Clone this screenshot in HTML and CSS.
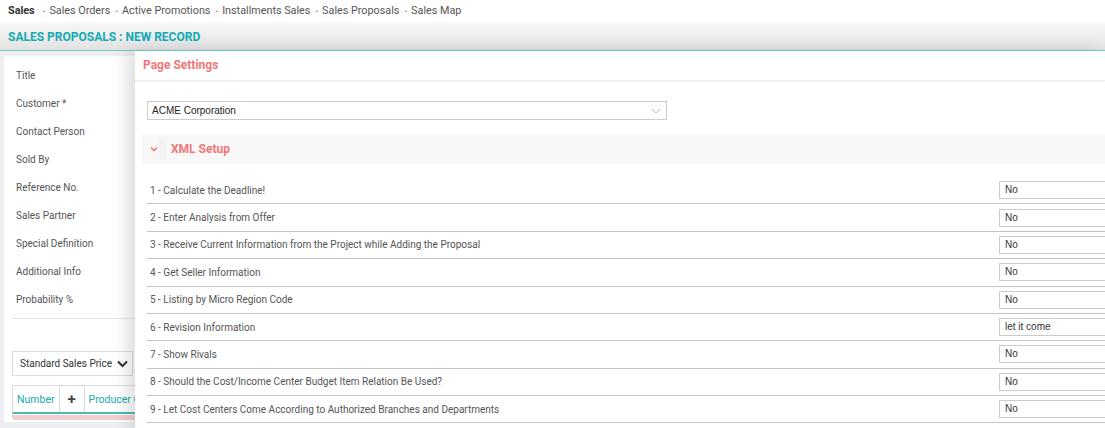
FILE: index.html
```html
<!DOCTYPE html>
<html lang="en">
<head>
    <meta charset="UTF-8">
    <title>Sales Proposals - New Record</title>
    <link rel="stylesheet" href="styles.css">
</head>
<body>
    <nav class="crumbs">
        <a class="crumb current">Sales</a>
        <a class="crumb">Sales Orders</a>
        <a class="crumb">Active Promotions</a>
        <a class="crumb">Installments Sales</a>
        <a class="crumb">Sales Proposals</a>
        <a class="crumb">Sales Map</a>
    </nav>

    <div class="title-bar">SALES PROPOSALS : NEW RECORD</div>

    <div class="workspace">
        <div class="form-card">
            <div class="field">Title</div>
            <div class="field">Customer *</div>
            <div class="field">Contact Person</div>
            <div class="field">Sold By</div>
            <div class="field">Reference No.</div>
            <div class="field">Sales Partner</div>
            <div class="field">Special Definition</div>
            <div class="field">Additional Info</div>
            <div class="field">Probability %</div>
            <hr class="divider">

            <div class="price-select">
                <span>Standard Sales Price</span>
                <svg width="11" height="8" viewBox="0 0 11 8"><path d="M1 1.5 L5.5 6 L10 1.5" fill="none" stroke="#333" stroke-width="2"/></svg>
            </div>

            <div class="grid-head">
                <div class="cell teal">Number</div>
                <div class="cell plus">+</div>
                <div class="cell teal">Producer Code</div>
            </div>
            <div class="grid-empty"></div>
        </div>

        <!-- panneau de réglages par-dessus le formulaire -->
        <aside class="settings">
            <div class="settings-head">Page Settings</div>
            <div class="settings-body">
                <div class="company-select">
                    <span>ACME Corporation</span>
                    <svg width="10" height="6" viewBox="0 0 10 6"><path d="M1 1 L5 5 L9 1" fill="none" stroke="#bbb" stroke-width="1"/></svg>
                </div>

                <div class="section-head">
                    <svg class="chev" width="8" height="6" viewBox="0 0 8 6"><path d="M1 1.5 L4 4.5 L7 1.5" fill="none" stroke="#f07a7a" stroke-width="1.6"/></svg>
                    <span class="ghost"></span>
                    <span class="section-title">XML Setup</span>
                </div>

                <div class="options">
                    <div class="option"><span>1 - Calculate the Deadline!</span><div class="value">No</div></div>
                    <div class="option"><span>2 - Enter Analysis from Offer</span><div class="value">No</div></div>
                    <div class="option"><span>3 - Receive Current Information from the Project while Adding the Proposal</span><div class="value">No</div></div>
                    <div class="option"><span>4 - Get Seller Information</span><div class="value">No</div></div>
                    <div class="option"><span>5 - Listing by Micro Region Code</span><div class="value">No</div></div>
                    <div class="option"><span>6 - Revision Information</span><div class="value">let it come</div></div>
                    <div class="option"><span>7 - Show Rivals</span><div class="value">No</div></div>
                    <div class="option"><span>8 - Should the Cost/Income Center Budget Item Relation Be Used?</span><div class="value">No</div></div>
                    <div class="option"><span>9 - Let Cost Centers Come According to Authorized Branches and Departments</span><div class="value">No</div></div>
                </div>
            </div>
        </aside>
    </div>
</body>
</html>
```

FILE: styles.css
```css
html, body {
    margin: 0;
    height: 100%;
    overflow: hidden;
}
body {
    font-family: Roboto, "Liberation Sans", Arial, sans-serif;
    background: #eceef1;
    color: #555;
    position: relative;
}
.crumbs {
    height: 22px;
    background: #fff;
    display: flex;
    align-items: center;
    padding-left: 8px;
    font-size: 10.8px;
    box-sizing: border-box;
    padding-bottom: 2px;
}
.crumb {
    color: #555;
    margin-right: 5px;
}
.crumb::before {
    content: "\2022";
    color: #888;
    font-size: 8px;
    margin-right: 4px;
}
.crumb.current {
    font-weight: bold;
    color: #333;
    margin-right: 8px;
}
.crumb.current::before {
    content: none;
}
.title-bar {
    height: 28px;
    line-height: 31px;
    padding-left: 8px;
    background: linear-gradient(#f8f8f8, #e2e2e2);
    border-bottom: 1px solid #6fd0c6;
    color: #12aab4;
    font-weight: bold;
    font-size: 12px;
}
.workspace {
    padding: 5px 0 0 4px;
}
.form-card {
    background: #fff;
    border-radius: 3px;
    padding: 6px 0 0 8px;
    height: 360px;
}
.field {
    height: 28px;
    line-height: 28px;
    padding-left: 4px;
    font-size: 10px;
    color: #555;
}
.divider {
    border: 0;
    border-top: 1px solid #e4e4e4;
    margin: 4px 0 0 0;
}
.price-select {
    margin-top: 32px;
    width: 121px;
    height: 25px;
    border: 1px solid #ddd;
    box-sizing: border-box;
    display: flex;
    align-items: center;
    justify-content: space-between;
    padding: 0 4px 0 7px;
    font-size: 10px;
    color: #333;
}
.grid-head {
    margin-top: 9px;
    display: flex;
    height: 29px;
    border: 1px solid #ddd;
    border-bottom: 2px solid #45bdb3;
    box-sizing: border-box;
}
.cell {
    display: flex;
    align-items: center;
    padding: 0 4px;
    font-size: 10.5px;
    border-right: 1px solid #ddd;
    white-space: nowrap;
}
.cell.teal {
    color: #15a9b0;
}
.cell.plus {
    width: 16px;
    justify-content: center;
    font-weight: bold;
    font-size: 15px;
    color: #444;
}
.grid-empty {
    height: 5px;
    margin-top: 1px;
    background: #f2cfcf;
    border-radius: 0 0 3px 3px;
}
.settings {
    position: absolute;
    left: 135px;
    top: 51px;
    right: 0;
    bottom: 0;
    background: #fff;
    box-shadow: -8px 0 14px rgba(0, 0, 0, 0.13);
    overflow: hidden;
}
.settings-head {
    height: 29px;
    line-height: 29px;
    padding-left: 8px;
    font-size: 12px;
    font-weight: bold;
    color: #f07777;
    border-bottom: 1px solid #eee;
    box-shadow: 0 1px 2px rgba(0, 0, 0, 0.04);
}
.settings-body {
    padding-left: 7px;
}
.company-select {
    margin: 20px 0 0 5px;
    width: 520px;
    height: 19px;
    border: 1px solid #ccc;
    box-sizing: border-box;
    display: flex;
    align-items: center;
    justify-content: space-between;
    padding: 0 5px 0 4px;
    font-family: "Liberation Sans", Arial, sans-serif;
    font-size: 10px;
    color: #222;
}
.section-head {
    margin-top: 14px;
    height: 30px;
    background: #f8f8f8;
    display: flex;
    align-items: center;
}
.chev {
    margin-left: 8px;
}
.ghost {
    width: 7px;
    height: 22px;
    background: #f3f3f3;
    margin-left: 1px;
}
.section-title {
    margin-left: 5px;
    font-size: 12px;
    font-weight: bold;
    color: #f07777;
}
.options {
    margin-top: 13px;
    padding-left: 5px;
}
.option {
    display: grid;
    grid-template-columns: 852px 140px;
    align-items: center;
    height: 27.375px;
    box-sizing: border-box;
    border-bottom: 1px solid #c4c4c4;
    padding-left: 3px;
    font-size: 10px;
    color: #555;
}
.value {
    margin-left: -3px;
    height: 18px;
    line-height: 16px;
    border: 1px solid #ccc;
    box-sizing: border-box;
    padding-left: 5px;
    font-family: "Liberation Sans", Arial, sans-serif;
    font-size: 10px;
    color: #333;
}
```
